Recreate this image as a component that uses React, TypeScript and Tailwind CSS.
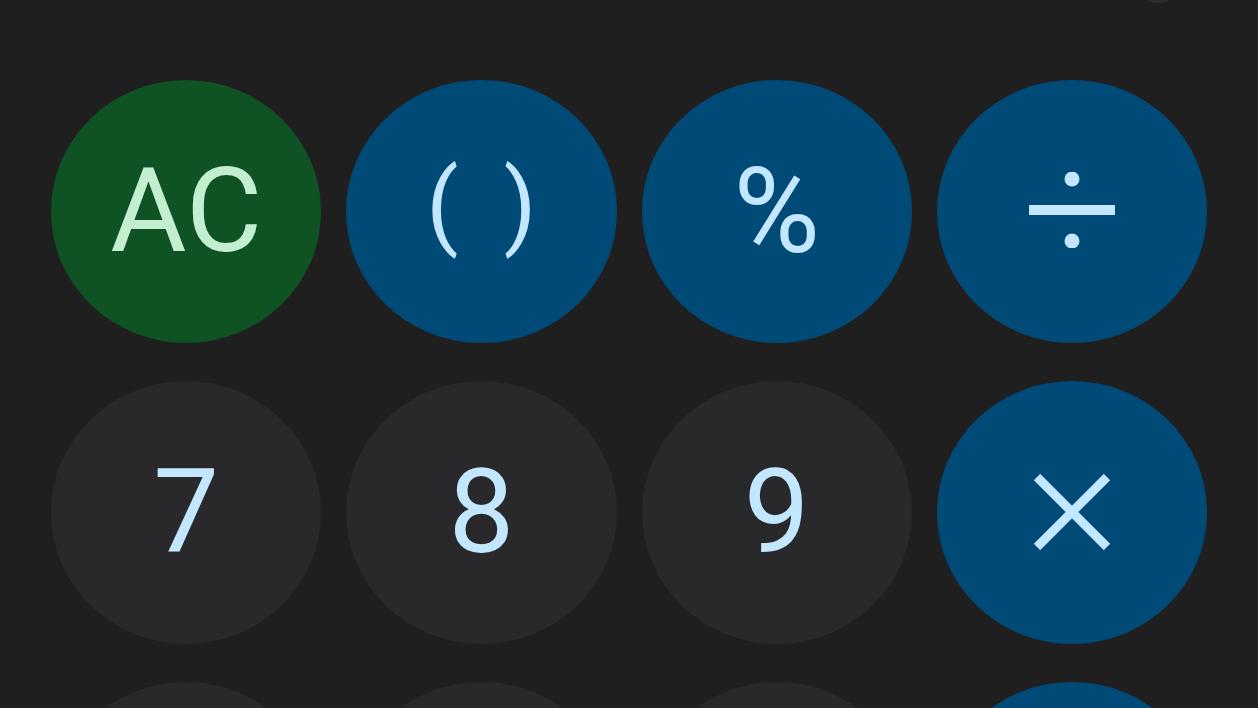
import React from "react";

type Key = { label: string; kind: "green" | "blue" | "gray"; cls?: string };

const keys: Key[] = [
  { label: "AC", kind: "green" },
  { label: "( )", kind: "blue", cls: "text-[94px] [word-spacing:22px] -translate-y-[7px]" },
  { label: "%", kind: "blue", cls: "text-[118px]" },
  { label: "÷", kind: "blue" },
  { label: "7", kind: "gray" },
  { label: "8", kind: "gray" },
  { label: "9", kind: "gray" },
  { label: "×", kind: "blue" },
  { label: "4", kind: "gray" },
  { label: "5", kind: "gray" },
  { label: "6", kind: "gray" },
  { label: "−", kind: "blue" },
];

const kindCls: Record<Key["kind"], string> = {
  green: "bg-[#0f5223] text-[#c4eed0]",
  blue: "bg-[#004a77] text-[#c2e7ff]",
  gray: "bg-[#29292b] text-[#c2e7ff]",
};

export default function App() {
  return (
    <div
      className="relative h-[708px] w-[1258px] overflow-hidden bg-[#1f1f1f]"
      style={{ fontFamily: "Roboto, 'Open Sans', sans-serif" }}
    >
      <div className="absolute right-[76px] top-[-45px] h-[48px] w-[48px] rounded-full bg-[#2e2e2e]" />
      <div className="grid grid-cols-4 gap-x-[25px] gap-y-[38px] px-[51px] pt-[80px]">
        {keys.map((k, i) => (
          <button
            key={i}
            className={`flex h-[263px] items-center justify-center rounded-[50%] text-[117px] font-normal leading-none ${kindCls[k.kind]}`}
          >
            {k.label === "÷" ? (
              <svg width="86" height="76" viewBox="0 0 86 76" className="mt-[-4px]">
                <circle cx="43" cy="7" r="7.5" fill="#c2e7ff" />
                <rect x="0" y="33" width="86" height="10" fill="#c2e7ff" />
                <circle cx="43" cy="69" r="7.5" fill="#c2e7ff" />
              </svg>
            ) : k.label === "×" ? (
              <svg width="78" height="76" viewBox="0 0 78 76" className="mt-[-2px]">
                <path d="M4 3 L74 73 M74 3 L4 73" stroke="#c2e7ff" strokeWidth="9" strokeLinecap="butt" />
              </svg>
            ) : (
              <span className={`inline-block ${k.cls ?? ""}`}>{k.label}</span>
            )}
          </button>
        ))}
      </div>
    </div>
  );
}
